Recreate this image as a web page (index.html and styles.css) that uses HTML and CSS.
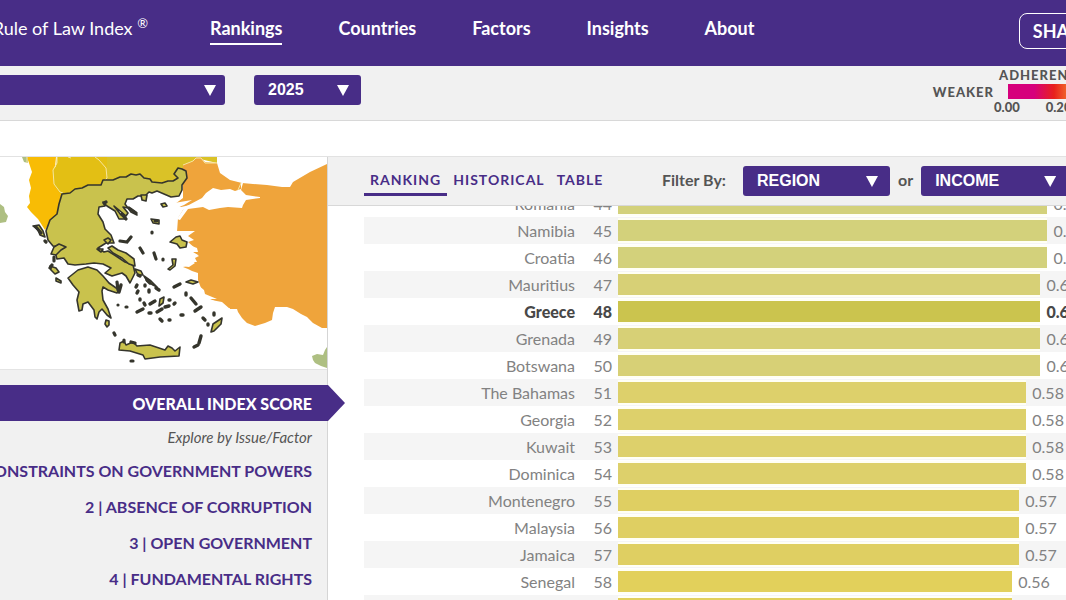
FILE: index.html
```html
<!DOCTYPE html>
<html lang="en">
<head>
<meta charset="utf-8">
<title>Rule of Law Index</title>
<link rel="stylesheet" href="styles.css">
</head>
<body>
<header class="site-header">
  <a class="brand" href="#"><span>Rule of Law Index <sup>®</sup></span></a>
  <nav class="main-nav">
    <a class="active" href="#">Rankings</a>
    <a href="#">Countries</a>
    <a href="#">Factors</a>
    <a href="#">Insights</a>
    <a href="#">About</a>
  </nav>
  <button class="share" type="button">SHARE</button>
</header>

<section class="selection-bar">
  <div class="picker picker-country"><select aria-label="Country"><option></option></select></div>
  <div class="picker picker-year"><select aria-label="Year"><option>2025</option></select></div>
  <div class="legend">
    <span class="legend-weaker">WEAKER</span>
    <div class="legend-scale">
      <span class="legend-title">ADHERENCE</span>
      <div class="legend-gradient"></div>
      <div class="legend-ticks"><span>0.00</span><span>0.20</span></div>
    </div>
  </div>
</section>

<main class="content">
  <aside class="sidebar">
    <svg class="map" viewBox="0 157 327 212" role="img" aria-label="Map of Greece">
      <rect x="0" y="157" width="327" height="213" fill="#fff"/>
      <path fill="#aebf82" d="M0 204l4 3 1 5 3 4-2 6-6 1zM22 157h6v6l-4-1zM312 356l5-2 6 1 2-5 2-3v21l-6-2-6-3-2-3z"/>
      <path fill="#f8bc05" d="M27 157H56L54 177L63 193L60 210L50 222L45 230L38 219L31 212L27 207L30 203L29 196L31 188L29 180L32 172L30 166Z"/>
      <path fill="#e3bf14" d="M57 157H107V184L92 190L62 196L54 185L52 172L56 166Z"/>
      <path fill="#dac227" d="M107 157H217V163L200 159L183 168L186 175L181 182L160 184L140 180L107 190Z"/>
      <path fill="#efa43b" d="M183 165L193 161L196 158L200 157L205 162L217 163L220 173L230 180L242 183L253 184L267 185L282 187H290L293 182L310 172L327 164V328L322 328L313 323L307 317L301 314L293 309L287 307L275 307L273 313L272 320L265 323L255 326L247 323L242 318L238 312L237 309L230 309L222 302L217 302L210 299L203 298L202 293L201 288L198 280L198 273L192 271L188 269L183 267L189 265L185 263L191 262H197L195 258L199 256L193 252H198L197 248L184 243L188 240L179 237L177 232L178 218L183 210L190 205L181 207L175 204L183 198Z"/>
      <path fill="#fff" d="M177 219L185 207L202 198L206 193L213 188L221 190L230 189L235 191L241 189L241 183H243L241 190L246 195L260 197V198L246 200L243 205L242 208L228 207L220 208L209 210L203 207L188 209L180 220ZM174 203L192 200L184 205L174 209ZM176 231L195 231L188 236L194 240L188 242L196 249L190 251L198 255L190 259L195 263L189 267L180 266ZM198 285L204 290L205 294L217 299H206L222 302L213 305L223 308H230L228 312H204L196 300Z"/>
      <path fill="none" stroke="#f7e6a0" stroke-width="1" d="M27 157V163M57 157L57 163L53 170L54 184L60 192L63 193M68 157L71 158M95 157L99 160L106 168L107 178L105 180M183 165L193 161L196 158L201 158L205 163L217 163M241 183L238 190"/>
      <g fill="#c9c24d" stroke="#35352c" stroke-width="1.6" stroke-linejoin="round">
        <path d="M62 194L70 193L75 189L82 188L88 185L101 185L103 180L113 180L120 177L126 177L131 174L136 175L140 174L144 178L150 179L152 182L162 183L168 181L173 181L178 178L174 174L178 168L182 169L186 171L187 178L182 185L182 190L179 196L171 197L164 194L157 191L152 193L149 192L145 196L138 196L133 199H127L125 204L128 208L134 211L137 215L131 212L128 208L123 207L128 213L126 216L119 210L114 206L121 215L126 219L119 219L115 211L107 206L103 202L105 206L99 207L98 214L103 222L105 229L111 235L114 243L106 243L98 248L104 252L108 251L116 256L125 262L133 265L135 273L130 283L126 276L122 273L112 276L105 273L111 268L103 264L94 263L86 264L75 265L68 264L64 258L57 259L55 252L60 247L53 246L48 240L46 231L50 220L57 214L59 204Z"/>
        <path d="M68 278L73 274L78 270L88 267L97 270L103 276L109 283L119 290L117 293L108 290L103 287L102 291L103 300L108 309L111 318L107 315L102 309L99 312L97 319L95 317L94 310L88 302L83 304L82 310L79 311L77 300L79 292L73 285Z"/>
        <path d="M108 248L112 246L118 250L126 253L134 259L135 266L129 264L122 258L113 253ZM119 350L120 343L124 341L126 345L133 342L137 346L150 345L165 350L168 346L172 348L175 351L180 347L179 356L160 357L145 359L143 355L130 351ZM33 226L39 225L43 231L45 237L40 235L38 230ZM170 242L176 237L180 236L182 240L187 242L186 247L180 248L177 244ZM172 259L176 259L175 266L170 270L168 269L173 265ZM211 332L213 324L222 318L221 324L214 331ZM186 282L191 280L198 282L193 284ZM135 269L141 271L143 275L138 275ZM141 195L147 195L146 201L142 200ZM50 266L56 268L59 272L55 274L51 270ZM56 278L61 281L61 283L56 281ZM144 276L151 281L157 287L153 285L147 281ZM106 320L109 321L109 325L107 327L105 324ZM160 299L164 297L163 303L159 306Z"/>
        <path d="M54 247L59 244L66 247L61 250L56 255L51 254ZM104 240L108 238L111 240L108 244ZM151 219L159 220L159 224L153 223ZM97 249L103 249L101 252ZM161 204L165 203L167 206L163 207Z"/>
      </g>
      <path fill="none" stroke="#35352c" stroke-width="3.2" stroke-linecap="round" d="M36 227L41 233M45 241L46 242M54 257V261M50 268L52 265M129 208L136 213M122 214L126 219M104 203L106 202M155 221H157M152 232V233M140 248L143 253M120 241L127 242L131 237M163 259V260M154 253L156 259M117 282L118 290M118 305H118M126 307H127M114 333L115 335M131 361H133M124 340V342M131 342L135 343"/>
      <path fill="none" stroke="#35352c" stroke-width="3.4" stroke-linecap="round" d="M137 285L136 287M145 285V286M138 291L137 293M149 290V292M140 299V300M144 303L145 305M137 312L143 309M150 304L155 301M149 313H151M157 312L162 309M160 319L162 321M169 320H170M156 288L159 290M174 287L180 284M186 293V295M191 298L196 304M195 311L201 307M181 315H183M214 313V315M203 318L205 320M208 324V325M201 336L199 343M194 347L198 345M165 307L169 306M169 300H170M174 304L175 303M138 275L140 276M147 280L150 283M121 285L119 292"/>
    </svg>
    <nav class="factor-nav">
      <a class="overall" href="#">OVERALL INDEX SCORE</a>
      <p class="explore">Explore by Issue/Factor</p>
      <a href="#">1 | CONSTRAINTS ON GOVERNMENT POWERS</a>
      <a href="#">2 | ABSENCE OF CORRUPTION</a>
      <a href="#">3 | OPEN GOVERNMENT</a>
      <a href="#">4 | FUNDAMENTAL RIGHTS</a>
    </nav>
  </aside>

  <section class="rankings">
    <div class="toolbar">
      <div class="tabs">
        <button class="tab selected" type="button">RANKING</button>
        <button class="tab" type="button">HISTORICAL</button>
        <button class="tab" type="button">TABLE</button>
      </div>
      <div class="filters">
        <label class="filter-label" for="region">Filter By:</label>
        <div class="picker picker-filter"><select id="region"><option>REGION</option></select></div>
        <label for="income">or</label>
        <div class="picker picker-filter"><select id="income"><option>INCOME</option></select></div>
      </div>
    </div>
    <ol class="chart">
      <li class="row c61"><span class="name">Romania</span><span class="rank">44</span><span class="bar"></span><span class="score">0.61</span></li>
      <li class="row c61"><span class="name">Namibia</span><span class="rank">45</span><span class="bar"></span><span class="score">0.61</span></li>
      <li class="row c61"><span class="name">Croatia</span><span class="rank">46</span><span class="bar"></span><span class="score">0.61</span></li>
      <li class="row c60"><span class="name">Mauritius</span><span class="rank">47</span><span class="bar"></span><span class="score">0.60</span></li>
      <li class="row c60 current"><span class="name">Greece</span><span class="rank">48</span><span class="bar"></span><span class="score">0.60</span></li>
      <li class="row c60"><span class="name">Grenada</span><span class="rank">49</span><span class="bar"></span><span class="score">0.60</span></li>
      <li class="row c60"><span class="name">Botswana</span><span class="rank">50</span><span class="bar"></span><span class="score">0.60</span></li>
      <li class="row c58"><span class="name">The Bahamas</span><span class="rank">51</span><span class="bar"></span><span class="score">0.58</span></li>
      <li class="row c58"><span class="name">Georgia</span><span class="rank">52</span><span class="bar"></span><span class="score">0.58</span></li>
      <li class="row c58"><span class="name">Kuwait</span><span class="rank">53</span><span class="bar"></span><span class="score">0.58</span></li>
      <li class="row c58"><span class="name">Dominica</span><span class="rank">54</span><span class="bar"></span><span class="score">0.58</span></li>
      <li class="row c57"><span class="name">Montenegro</span><span class="rank">55</span><span class="bar"></span><span class="score">0.57</span></li>
      <li class="row c57"><span class="name">Malaysia</span><span class="rank">56</span><span class="bar"></span><span class="score">0.57</span></li>
      <li class="row c57"><span class="name">Jamaica</span><span class="rank">57</span><span class="bar"></span><span class="score">0.57</span></li>
      <li class="row c56"><span class="name">Senegal</span><span class="rank">58</span><span class="bar"></span><span class="score">0.56</span></li>
      <li class="row c56"><span class="name"></span><span class="rank"></span><span class="bar"></span><span class="score"></span></li>
    </ol>
  </section>
</main>
</body>
</html>
```

FILE: styles.css
```css
* { box-sizing: border-box; }

body {
  margin: 0;
  height: 100vh;
  display: flex;
  flex-direction: column;
  overflow: hidden;
  background: #fff;
  color: #555;
  font-family: Lato, sans-serif;
}

a { color: inherit; text-decoration: none; }
button, select { font: inherit; }

/* Header */
.site-header {
  display: flex;
  align-items: center;
  flex: none;
  height: 66px;
  padding-bottom: 8px;
  background: #482d87;
  color: #fff;
}
.brand {
  display: flex;
  flex: none;
  justify-content: flex-end;
  width: 148px;
  padding-bottom: 2px;
  font-size: 18px;
  white-space: nowrap;
}
.brand sup { font-size: 13px; line-height: 0; }
.main-nav {
  display: flex;
  flex: 1 0 auto;
  gap: 56px;
  padding-left: 62px;
  font-size: 18px;
  font-weight: 700;
}
.main-nav a {
  padding: 3px 0 4px;
  border-bottom: 2px solid transparent;
}
.main-nav .active { border-color: #fff; }
.share {
  flex: none;
  height: 36px;
  margin: 3px -39px 0 0;
  padding: 0 13px;
  border: 1px solid #fff;
  border-radius: 8px;
  background: transparent;
  color: #fff;
  font-size: 18px;
  font-weight: 700;
}

/* Drop-downs */
.picker { position: relative; flex: none; }
.picker select {
  display: block;
  appearance: none;
  width: 100%;
  height: 30px;
  padding: 0 14px 1px;
  border: 0;
  border-radius: 3px;
  background: #482d87;
  color: #fff;
  font: 700 16px "Liberation Sans", sans-serif;
}
.picker::after {
  content: "";
  position: absolute;
  top: 10px;
  right: 9px;
  width: 12px;
  height: 11px;
  background: #fff;
  clip-path: polygon(0 0, 100% 0, 50% 100%);
  pointer-events: none;
}
.picker-country { width: 225px; }
.picker-country select { border-radius: 0 3px 3px 0; }
.picker-year { width: 107px; }
.picker-year::after,
.picker-filter::after { right: 12px; }
.picker-filter { width: 147px; }

/* Selection bar */
.selection-bar {
  display: flex;
  flex: none;
  align-items: flex-start;
  gap: 29px;
  height: 55px;
  padding-top: 9px;
  border-bottom: 1px solid #d8d8d8;
  background: #f1f1f1;
}
.legend {
  display: flex;
  align-items: flex-start;
  margin-left: auto;
  margin-top: -8px;
  font-size: 13px;
  font-weight: 900;
  line-height: 16px;
}
.legend-weaker { padding-top: 17px; letter-spacing: 1px; }
.legend-scale { width: 72px; white-space: nowrap; }
.legend-title { display: block; padding-left: 5px; letter-spacing: 1px; }
.legend-gradient {
  height: 15px;
  margin-left: 14px;
  margin-top: 1px;
  background: linear-gradient(90deg, #d6007c 0, #d6007c 26px, #e8201c 46px, #f0602a 58px);
}
.legend-ticks { display: flex; gap: 26px; }

/* Main area */
.content {
  display: flex;
  flex: 1;
  min-height: 0;
  margin-top: 35px;
  border-top: 1px solid #e2e2e2;
}
.sidebar {
  flex: none;
  width: 328px;
  border-right: 1px solid #d5d5d5;
  background: #f1f1f1;
}
.map { display: block; width: 100%; border-bottom: 1px solid #e4e4e4; }
.factor-nav {
  padding-top: 15px;
  color: #482d87;
  font-size: 16px;
  font-weight: 700;
}
.factor-nav a,
.explore {
  display: flex;
  justify-content: flex-end;
  align-items: center;
  height: 36px;
  padding-right: 15px;
  white-space: nowrap;
}
.factor-nav .overall {
  margin-right: -18px;
  padding-right: 33px;
  background: #482d87;
  color: #fff;
  font-weight: 900;
  clip-path: polygon(0 0, calc(100% - 17px) 0, 100% 50%, calc(100% - 17px) 100%, 0 100%);
}
.explore {
  height: 31px;
  margin: 0;
  color: #555;
  font-size: 15px;
  font-style: italic;
  font-weight: 400;
}

/* Ranking panel */
.rankings { flex: 1; min-width: 0; overflow: hidden; }
.toolbar {
  position: relative;
  z-index: 1;
  display: flex;
  align-items: center;
  height: 49px;
  padding-left: 36px;
  border-bottom: 1px solid #d8d8d8;
  background: #f1f1f1;
}
.tabs { display: flex; width: 298px; flex: none; }
.tab {
  padding: 5px 6px;
  border: 0;
  border-bottom: 3px solid transparent;
  background: none;
  color: #482d87;
  font-size: 14px;
  font-weight: 700;
  letter-spacing: 1px;
}
.tab.selected { border-color: #482d87; }
.filters {
  display: flex;
  flex: none;
  align-items: center;
  font-size: 16px;
  font-weight: 700;
}
.filters label { margin-right: 8px; padding-bottom: 3px; }
.filters .filter-label { margin-right: 17px; }
.filters .picker { margin-right: 8px; }

/* Bars: each point of score is the same share of --track */
.chart {
  --track: 704px;
  margin: -16px 0 0;
  padding: 0 0 0 36px;
  list-style: none;
  color: #828282;
  font-size: 16px;
}
.row {
  display: grid;
  grid-template-columns: 211px 37px 6px calc(var(--track) * var(--score)) 1fr;
  align-items: center;
  height: 27px;
  white-space: nowrap;
}
.row:nth-child(even) { background: #f5f5f5; }
.name, .rank { text-align: right; }
.bar {
  grid-column: 4;
  height: 25px;
  border-top: 2px solid #fffff5;
  border-bottom: 2px solid #fffff5;
  background: var(--fill);
}
.score { padding-left: 6px; }
.current { color: #484848; font-weight: 900; }
.c61 { --score: 0.61; --fill: #d3d17b; }
.c60 { --score: 0.6; --fill: #d7d076; }
.c58 { --score: 0.58; --fill: #ddd06b; }
.c57 { --score: 0.57; --fill: #dfcf62; }
.c56 { --score: 0.56; --fill: #e2d05b; }
.row.current { --fill: #cbc44e; }
```
